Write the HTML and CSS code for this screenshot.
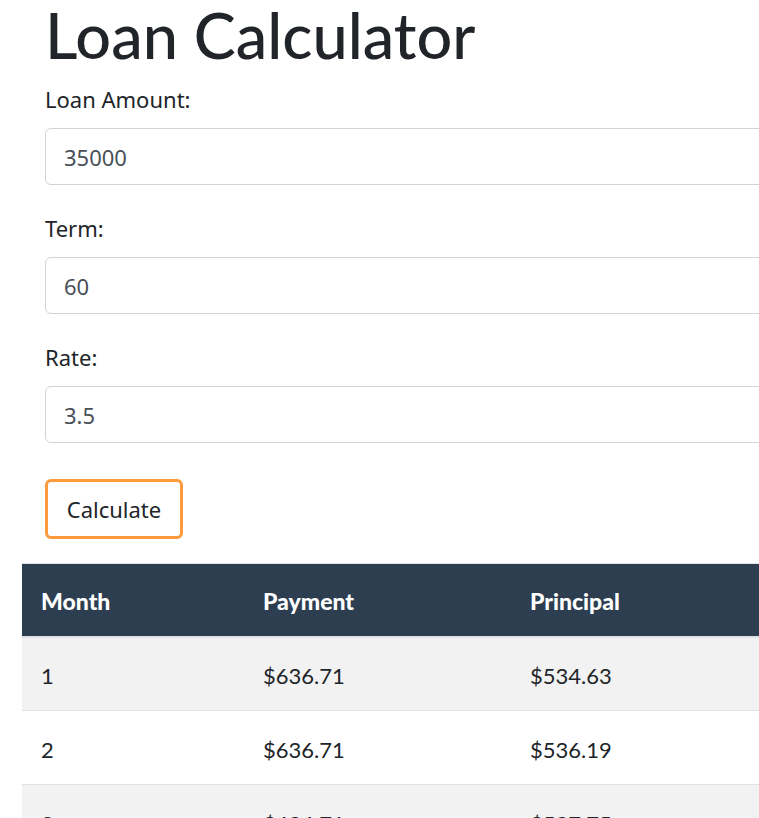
FILE: index.html
```html
<!DOCTYPE html>
<html lang="en">
<head>
<meta charset="utf-8">
<title>Loan Calculator</title>
<link rel="stylesheet" href="styles.css">
</head>
<body>
<div class="page">
  <form class="calc">
    <h1 class="title">Loan Calculator</h1>
    <div class="group">
      <label class="label" for="amount">Loan Amount:</label>
      <input class="field" id="amount" type="text" value="35000">
    </div>
    <div class="group">
      <label class="label" for="term">Term:</label>
      <input class="field" id="term" type="text" value="60">
    </div>
    <div class="group last">
      <label class="label" for="rate">Rate:</label>
      <input class="field" id="rate" type="text" value="3.5">
    </div>
    <button class="btn" type="button">Calculate</button>
  </form>
  <table class="schedule">
    <thead>
      <tr><th class="c1">Month</th><th class="c2">Payment</th><th class="c3">Principal</th><th class="c4">Interest</th><th class="c5">Balance</th></tr>
    </thead>
    <tbody>
      <tr class="odd"><td>1</td><td>$636.71</td><td>$534.63</td><td>$102.08</td><td>$34,465.37</td></tr>
      <tr><td>2</td><td>$636.71</td><td>$536.19</td><td>$100.52</td><td>$33,929.18</td></tr>
      <tr class="odd"><td>3</td><td>$636.71</td><td>$537.75</td><td>$98.96</td><td>$33,391.43</td></tr>
    </tbody>
  </table>
</div>
</body>
</html>
```
FILE: styles.css
```css
html, body {
  margin: 0;
  padding: 0;
  overflow: hidden;
  background: #fff;
}
.page {
  width: 1300px;
}
.calc {
  padding-left: 45px;
  width: 900px;
  font-family: "Noto Sans", "Open Sans", sans-serif;
  color: #212529;
}
.title {
  margin: 0;
  font-family: "Lato", "Noto Sans", sans-serif;
  font-size: 63px;
  font-weight: 500;
  line-height: 70px;
  height: 84px;
  color: #212529;
}
.group {
  margin-bottom: 28px;
}
.group.last {
  margin-bottom: 36px;
}
.label {
  display: block;
  font-size: 22px;
  line-height: 30px;
  height: 30px;
  margin-bottom: 14px;
}
.field {
  display: block;
  box-sizing: border-box;
  width: 100%;
  height: 57px;
  padding: 0 18px;
  border: 1px solid #ced4da;
  border-radius: 6px;
  font-family: inherit;
  font-size: 22px;
  color: #495057;
  background: #fff;
}
.btn {
  display: block;
  box-sizing: border-box;
  height: 60px;
  width: 138px;
  border: 3px solid #fd9a3c;
  border-radius: 6px;
  background: #fff;
  font-family: inherit;
  font-size: 22px;
  color: #212529;
  padding: 0;
}
.schedule {
  margin: 24px 0 0 22px;
  border-collapse: collapse;
  width: 1200px;
  font-family: "Lato", "Noto Sans", sans-serif;
  font-size: 22px;
  color: #212529;
  border-top: 1px solid #dee2e6;
}
.schedule th {
  background: #2c3e50;
  color: #fff;
  font-weight: 900;
  font-size: 23px;
  text-align: left;
  height: 73px;
  padding: 2px 0 0 19px;
  box-sizing: border-box;
  border-bottom: 2px solid #dee2e6;
}
.schedule td {
  height: 74px;
  padding: 3px 0 0 19px;
  box-sizing: border-box;
  border-bottom: 1px solid #dee2e6;
}
.schedule tr.odd td {
  background: #f2f2f2;
}
.c1 { width: 222px; }
.c2 { width: 267px; }
.c3 { width: 267px; }
```
